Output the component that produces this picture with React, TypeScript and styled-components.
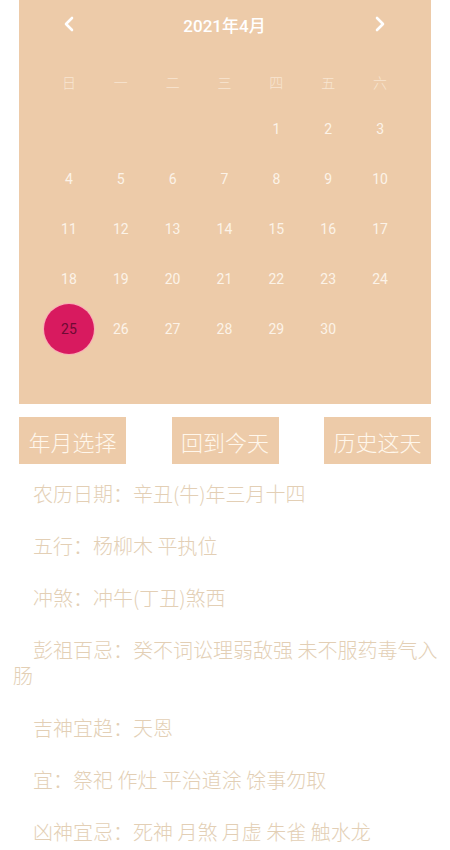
import styled, { createGlobalStyle } from "styled-components";

const WEEKDAYS = ["日", "一", "二", "三", "四", "五", "六"];

const INFO_LINES = [
  "农历日期：辛丑(牛)年三月十四",
  "五行：杨柳木 平执位",
  "冲煞：冲牛(丁丑)煞西",
  "彭祖百忌：癸不词讼理弱敌强 未不服药毒气入肠",
  "吉神宜趋：天恩",
  "宜：祭祀 作灶 平治道涂 馀事勿取",
  "凶神宜忌：死神 月煞 月虚 朱雀 触水龙",
];

const ACTIONS = ["年月选择", "回到今天", "历史这天"];

const GlobalStyle = createGlobalStyle`
  body {
    margin: 0;
    background: #ffffff;
    font-family: Roboto, "Noto Sans CJK SC", sans-serif;
  }
`;

const Page = styled.div`
  width: 450px;
  display: flex;
  flex-direction: column;
`;

const CalendarPanel = styled.div`
  margin: 0 19px;
  background: #edcba9;
  padding: 0 25px 0 24px;
  display: flex;
  flex-direction: column;
`;

const Header = styled.div`
  height: 48px;
  display: grid;
  grid-template-columns: repeat(7, 1fr);
  align-items: center;
`;

const Title = styled.div`
  grid-column: 2 / 7;
  text-align: center;
  color: #ffffff;
  font-size: 17px;
  font-weight: 500;
`;

const ArrowButton = styled.div`
  display: flex;
  justify-content: center;
  align-items: center;
`;

const WeekRow = styled.div`
  height: 44px;
  margin-top: 12px;
  display: grid;
  grid-template-columns: repeat(7, 1fr);
  align-items: center;
`;

const WeekLabel = styled.div`
  text-align: center;
  font-size: 14px;
  color: #f8e6d2;
  font-family: "Noto Sans CJK SC", sans-serif;
  font-weight: 300;
`;

const DayGrid = styled.div`
  display: grid;
  grid-template-columns: repeat(7, 1fr);
  grid-auto-rows: 50px;
`;

const DayCell = styled.div<{ $selected?: boolean }>`
  display: flex;
  justify-content: center;
  align-items: center;
  font-size: 14px;
  color: ${({ $selected }) => ($selected ? "#6e0a33" : "#fcf3e8")};
`;

const SelectedDot = styled.div`
  width: 50px;
  height: 50px;
  border-radius: 50%;
  background: #d81a5f;
  box-shadow: 0 0 0 1px rgba(255, 160, 190, 0.7);
  display: flex;
  justify-content: center;
  align-items: center;
`;

const ActionRow = styled.div`
  margin: 13px 19px 0;
  display: flex;
  justify-content: space-between;
`;

const ActionButton = styled.button`
  width: 107px;
  height: 47px;
  border: none;
  padding: 0;
  background: #edcba9;
  color: #fff7ec;
  font-family: "Noto Sans CJK SC", sans-serif;
  font-size: 22px;
  font-weight: 300;
`;

const InfoList = styled.div`
  margin-top: 17px;
  padding: 0 8px 0 13px;
  display: flex;
  flex-direction: column;
  gap: 26px;
`;

const InfoLine = styled.p`
  margin: 0;
  text-indent: 20px;
  font-family: "Noto Sans CJK SC", sans-serif;
  font-size: 20px;
  font-weight: 300;
  line-height: 26px;
  color: #e3cfb5;
`;

function Chevron({ dir }: { dir: "left" | "right" }) {
  return (
    <svg width="12" height="16" viewBox="0 0 12 16">
      <polyline
        points={dir === "left" ? "9,2 3,8 9,14" : "3,2 9,8 3,14"}
        fill="none"
        stroke="#ffffff"
        strokeWidth="2.6"
        strokeLinecap="round"
        strokeLinejoin="round"
      />
    </svg>
  );
}

export default function App() {
  // April 2021 starts on a Thursday
  const cells: (number | null)[] = [
    ...new Array(4).fill(null),
    ...Array.from({ length: 30 }, (_, i) => i + 1),
  ];
  while (cells.length < 42) cells.push(null);

  return (
    <Page>
      <GlobalStyle />
      <CalendarPanel>
        <Header>
          <ArrowButton>
            <Chevron dir="left" />
          </ArrowButton>
          <Title>2021年4月</Title>
          <ArrowButton>
            <Chevron dir="right" />
          </ArrowButton>
        </Header>
        <WeekRow>
          {WEEKDAYS.map(w => (
            <WeekLabel key={w}>{w}</WeekLabel>
          ))}
        </WeekRow>
        <DayGrid>
          {cells.map((day, i) => (
            <DayCell key={i} $selected={day === 25}>
              {day === 25 ? <SelectedDot>{day}</SelectedDot> : day}
            </DayCell>
          ))}
        </DayGrid>
      </CalendarPanel>
      <ActionRow>
        {ACTIONS.map(a => (
          <ActionButton key={a}>{a}</ActionButton>
        ))}
      </ActionRow>
      <InfoList>
        {INFO_LINES.map(line => (
          <InfoLine key={line}>{line}</InfoLine>
        ))}
      </InfoList>
    </Page>
  );
}
